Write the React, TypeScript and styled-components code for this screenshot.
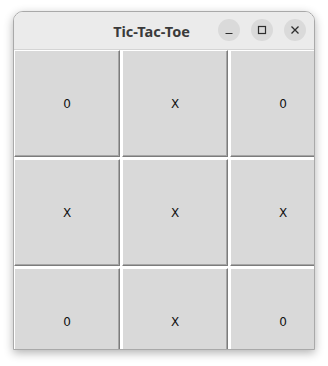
import styled, { createGlobalStyle } from "styled-components";

const GlobalStyle = createGlobalStyle`
  html, body {
    margin: 0;
    padding: 0;
    background: #ffffff;
  }
  body {
    font-family: "DejaVu Sans", "Noto Sans", sans-serif;
  }
`;

const board = ["0", "X", "0", "X", "X", "X", "0", "X", "0"];

export default function App() {
  return (
    <>
      <GlobalStyle />
      <Page>
        <Window>
          <TitleBar>
            <Title>Tic-Tac-Toe</Title>
            <Controls>
              <CtrlButton aria-label="minimize">
                <svg width="10" height="10" viewBox="0 0 10 10">
                  <path d="M1.5 8.5h7" stroke="#2e2e2e" strokeWidth="1.2" />
                </svg>
              </CtrlButton>
              <CtrlButton aria-label="maximize">
                <svg width="10" height="10" viewBox="0 0 10 10">
                  <rect x="1.5" y="1.5" width="7" height="7" fill="none" stroke="#2e2e2e" strokeWidth="1.2" />
                </svg>
              </CtrlButton>
              <CtrlButton aria-label="close">
                <svg width="10" height="10" viewBox="0 0 10 10">
                  <path d="M1.5 1.5l7 7M8.5 1.5l-7 7" stroke="#2e2e2e" strokeWidth="1.3" />
                </svg>
              </CtrlButton>
            </Controls>
          </TitleBar>
          <Content>
            <Grid>
              {board.map((mark, i) => (
                <Cell key={i}>{mark}</Cell>
              ))}
            </Grid>
          </Content>
        </Window>
      </Page>
    </>
  );
}

const Page = styled.div`
  width: 328px;
  height: 366px;
  box-sizing: border-box;
  padding: 11px 0 0 13px;
  overflow: hidden;
`;

const Window = styled.div`
  width: 302px;
  height: 339px;
  box-sizing: border-box;
  display: flex;
  flex-direction: column;
  border: 1px solid #a9a9a9;
  border-radius: 10px 10px 0 0;
  background: #ffffff;
  box-shadow: 0 3px 10px rgba(0, 0, 0, 0.3);
  overflow: hidden;
`;

const TitleBar = styled.div`
  position: relative;
  height: 37px;
  flex: none;
  display: flex;
  align-items: center;
  justify-content: center;
  background: #ebebeb;
  border-bottom: 1px solid #d4d4d4;
`;

const Title = styled.div`
  font-family: "Noto Sans", "Open Sans", sans-serif;
  font-weight: 700;
  font-size: 14.5px;
  color: #3a3a3a;
  margin-right: 25px;
`;

const Controls = styled.div`
  position: absolute;
  right: 8px;
  top: 7px;
  display: flex;
  gap: 11px;
`;

const CtrlButton = styled.div`
  width: 22px;
  height: 22px;
  border-radius: 50%;
  background: #dadada;
  display: flex;
  align-items: center;
  justify-content: center;
`;

const Content = styled.div`
  flex: 1;
  overflow: hidden;
  background: #ffffff;
`;

const Grid = styled.div`
  display: grid;
  grid-template-columns: repeat(3, 106px);
  grid-template-rows: repeat(3, 107px);
  gap: 2px;
`;

const Cell = styled.div`
  box-sizing: border-box;
  display: flex;
  align-items: center;
  justify-content: center;
  background: #d9d9d9;
  border-top: 1px solid #ffffff;
  border-left: 1px solid #ffffff;
  border-right: 1px solid #7c7c7c;
  border-bottom: 1px solid #7c7c7c;
  box-shadow: inset -1px -1px 0 #a6a6a6;
  font-family: "DejaVu Sans", sans-serif;
  font-size: 12px;
  color: #111111;
`;
